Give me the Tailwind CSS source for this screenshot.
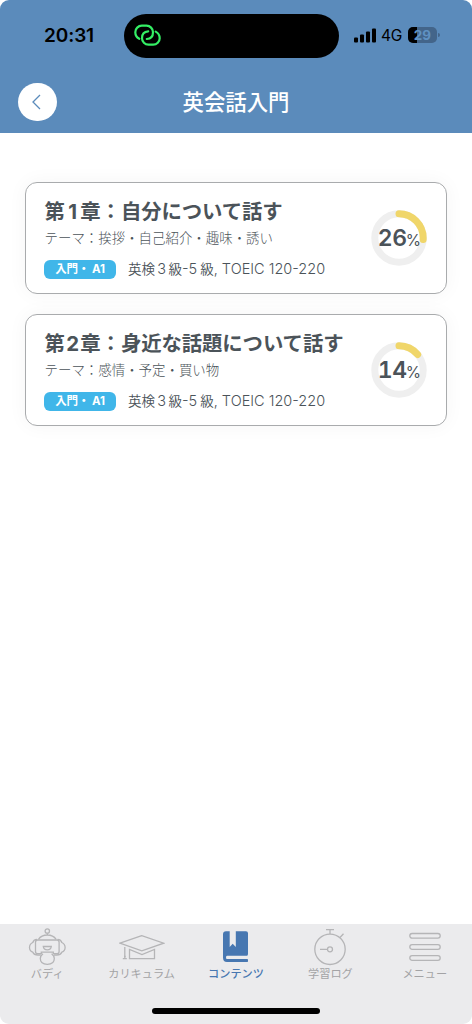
<!DOCTYPE html>
<html lang="ja">
<head>
<meta charset="utf-8">
<title>英会話入門</title>
<script src="https://cdn.jsdelivr.net/npm/@tailwindcss/browser@4"></script>
</head>
<body class="bg-white">
<div class="flex h-[1024px] w-[472px] flex-col overflow-hidden rounded-[9px] bg-white font-['Inter','Noto_Sans_CJK_JP',sans-serif] whitespace-nowrap text-[#4b5359]">
  <header class="h-[133px] shrink-0 bg-[#5b8bbb]">
    <div class="flex h-[71px] items-center pl-11 text-black">
      <span class="w-[80px] text-[19px] leading-none font-semibold tracking-[-0.1px]">20:31</span>
      <div class="flex h-11 w-[215px] items-center rounded-full bg-black pl-[9px]">
        <svg class="h-7 w-[30px]" viewBox="0 0 30 28" fill="none" stroke="#34ee64" stroke-width="2.2" stroke-linecap="round">
          <path d="M6.300 16.800Q2.300 14.600 2.300 10.200A6.500 6.500 0 0 1 8.800 3.700H13.500A6.500 6.500 0 0 1 20 10.200Q20 16.600 13.800 17"/>
          <path d="M22.700 9.600Q26.700 11.800 26.700 16.200A6.500 6.500 0 0 1 20.200 22.700H15.500A6.500 6.500 0 0 1 9 16.200Q9 9.800 15.200 9.400"/>
        </svg>
      </div>
      <svg class="ml-[15px] h-[15px] w-[22px]" viewBox="0 0 22 15"><rect y="9.5" width="4" height="5" rx="1"/><rect x="6" y="6.5" width="4" height="8" rx="1"/><rect x="12" y="3.5" width="4" height="11" rx="1"/><rect x="18" y=".5" width="4" height="14" rx="1"/></svg>
      <span class="ml-[5px] w-[27px] text-[15.5px] leading-none tracking-[-0.3px]">4G</span>
      <div class="relative h-4 w-[29px] -translate-y-px overflow-hidden rounded-[5px] bg-[#43658a]">
        <div class="h-full w-[9px] bg-black"></div>
        <span class="absolute inset-0 text-center text-[13.5px] leading-4 font-bold text-[#5f91c2]">29</span>
      </div>
      <div class="ml-px h-1 w-[2px] -translate-y-px rounded-r-full bg-[#43658a]"></div>
    </div>
    <div class="grid h-[62px] grid-cols-[75px_1fr_75px] items-center">
      <div class="ml-[18px] flex size-[38.5px] items-center justify-center rounded-full bg-white">
        <svg class="size-4" viewBox="0 0 16 16" fill="none" stroke="#5b8bbb" stroke-width="1.3"><path d="M11 1 4 8l7 7"/></svg>
      </div>
      <h1 class="text-center text-[21.4px] leading-8 font-medium text-white">英会話入門</h1>
    </div>
  </header>

  <main class="flex flex-1 flex-col gap-5 px-[25px] pt-[49px]">
    <section class="flex h-[112px] justify-between rounded-[12px] border border-[#a9abad] bg-white pr-[19px] pl-[18.5px] shadow-[0_0_20px_rgba(0,0,0,0.045)]">
      <div class="flex flex-col">
        <h2 class="mt-[14px] h-[29px] text-[20.4px] leading-[29px] font-bold tracking-[-0.1px]">第<span class="inline-block w-[15.5px] text-center">1</span>章：自分について話す</h2>
        <p class="mt-[2px] h-5 text-[13.45px] leading-5 font-light">テーマ：挨拶・自己紹介・趣味・誘い</p>
        <div class="mt-[11px] -ml-[0.5px] flex items-center text-[13.5px]">
          <span class="h-[19px] w-[72px] rounded-[6px] bg-[#40b6e9] text-center text-[11.5px] leading-[19px] font-bold tracking-[-0.1px] text-white">入門・ A1</span>
          <span class="ml-3 leading-5 font-[350]">英検<span class="inline-block w-[13.5px] text-center text-[14.5px]">3</span>級<span class="text-[14.5px]">-5</span><span class="ml-[3px]">級</span><span class="text-[14.5px]">, TOEIC 120-220</span></span>
        </div>
      </div>
      <div class="relative mt-[27px] size-14">
        <svg class="size-14" viewBox="0 0 56 56" fill="none" stroke-width="7"><circle cx="28" cy="28" r="24.2" stroke="#efefef"/><circle cx="28" cy="28" r="24.2" stroke="#f0d66a" stroke-linecap="round" pathLength="100" stroke-dasharray="26 100" transform="rotate(-90 28 28)"/></svg>
        <div class="absolute inset-0 flex items-baseline justify-center leading-[56px]"><span class="w-[28px] text-center text-[23px] font-semibold tabular-nums tracking-[-0.3px]">26</span><span class="text-[15.5px] tracking-[-0.5px]">%</span></div>
      </div>
    </section>
    <section class="flex h-[112px] justify-between rounded-[12px] border border-[#a9abad] bg-white pr-[19px] pl-[18.5px] shadow-[0_0_20px_rgba(0,0,0,0.045)]">
      <div class="flex flex-col">
        <h2 class="mt-[14px] h-[29px] text-[20.4px] leading-[29px] font-bold tracking-[-0.1px]">第<span class="inline-block w-[15.5px] text-center">2</span>章：身近な話題について話す</h2>
        <p class="mt-[2px] h-5 text-[13.45px] leading-5 font-light">テーマ：感情・予定・買い物</p>
        <div class="mt-[11px] -ml-[0.5px] flex items-center text-[13.5px]">
          <span class="h-[19px] w-[72px] rounded-[6px] bg-[#40b6e9] text-center text-[11.5px] leading-[19px] font-bold tracking-[-0.1px] text-white">入門・ A1</span>
          <span class="ml-3 leading-5 font-[350]">英検<span class="inline-block w-[13.5px] text-center text-[14.5px]">3</span>級<span class="text-[14.5px]">-5</span><span class="ml-[3px]">級</span><span class="text-[14.5px]">, TOEIC 120-220</span></span>
        </div>
      </div>
      <div class="relative mt-[27px] size-14">
        <svg class="size-14" viewBox="0 0 56 56" fill="none" stroke-width="7"><circle cx="28" cy="28" r="24.2" stroke="#efefef"/><circle cx="28" cy="28" r="24.2" stroke="#f0d66a" stroke-linecap="round" pathLength="100" stroke-dasharray="14 100" transform="rotate(-90 28 28)"/></svg>
        <div class="absolute inset-0 flex items-baseline justify-center leading-[56px]"><span class="w-[28px] text-center text-[23px] font-semibold tabular-nums tracking-[-0.3px]">14</span><span class="text-[15.5px] tracking-[-0.5px]">%</span></div>
      </div>
    </section>
  </main>

  <nav class="flex h-[100px] shrink-0 flex-col items-center bg-[#ebebed]">
    <div class="grid w-full grid-cols-5 text-center text-[11.2px] leading-4 text-[#a3a3a5]">
      <div class="flex flex-col items-center">
        <svg class="mt-1 h-[38px] w-[38px]" viewBox="0 0 38 38" fill="none" stroke="#b5b5b7" stroke-width="1.3"><circle cx="19.300" cy="3" r="2.200"/><path d="M19.300 5.200V7M10.500 11.300C12.500 8.300 15.500 7 19.300 7s6.800 1.300 8.800 4.300"/><path d="M9.500 12h19.600q2 0 2 2.200v9.300q0 2.200-2.200 2.200h-3.600v-1.500H13.300v1.500H9.700q-2.200 0-2.200-2.200v-9.300q0-2.200 2-2.200z"/><path d="M9 11.300Q5.500 11.500 4.800 14.500 1.500 16 1.500 19.500t3.300 4.700q1.200 2.800 5 2.800h3M29.600 11.300q3.500.2 4.200 3.200 3.300 1.500 3.300 5t-3.300 4.700q-1.200 2.800-5 2.800h-3"/><path d="M15.300 18.500h8q-.4 3.300-4 3.300t-4-3.300z"/><path d="M15 25.800q-2.700 2-2.700 4.800 0 5.800 7 5.800t7-5.800q0-2.800-2.700-4.800"/></svg>
        <span>バディ</span>
      </div>
      <div class="flex flex-col items-center">
        <svg class="mt-1 h-[38px] w-[46px]" viewBox="0 0 46 38" fill="none" stroke="#b5b5b7" stroke-width="1.300"><path d="M22.800 7.700.900 15.200l21.900 7.600 21.900-7.600zM10.500 21.500v9.200h25v-9.200L23 26.500zM5.800 19v12M3.800 30.700h4M5 28.500h1.800"/></svg>
        <span>カリキュラム</span>
      </div>
      <div class="flex flex-col items-center text-[#4777b1]">
        <svg class="mt-1 h-[38px] w-[28px]" viewBox="0 0 28 38"><path fill="currentColor" d="M4 3.300h3.700v15.800l3-3.300 3.100 3.300V3.300H24q2 0 2 2v20.500q0 2-1 2H5q-1 0-1 1.600t1 1.600h20.500q.5 0 .5 1.500t-.5 1.500H5q-4 0-4-4.500V6.300q0-3 3-3z"/></svg>
        <span class="font-medium">コンテンツ</span>
      </div>
      <div class="flex flex-col items-center">
        <svg class="mt-1 h-[38px] w-[34px]" viewBox="0 0 34 38" fill="none" stroke="#b5b5b7" stroke-width="1.300"><circle cx="17" cy="21.300" r="15.200"/><circle cx="17" cy="21.300" r="2.500"/><path d="M7 21.300h7.500M13 1.700h8M17 1.700v4.400M27 9.500l3.500-3.700"/></svg>
        <span>学習ログ</span>
      </div>
      <div class="flex flex-col items-center">
        <svg class="mt-1 h-[38px] w-[32px]" viewBox="0 0 32 38" fill="none" stroke="#b5b5b7" stroke-width="1.300"><rect x=".8" y="5.500" width="30.400" height="4.600" rx="2.300"/><rect x=".8" y="16.700" width="30.400" height="4.600" rx="2.300"/><rect x=".8" y="27.700" width="30.400" height="4.600" rx="2.300"/></svg>
        <span>メニュー</span>
      </div>
    </div>
    <div class="mt-[26px] h-[6px] w-[168px] rounded-full bg-black"></div>
  </nav>
</div>
</body>
</html>
